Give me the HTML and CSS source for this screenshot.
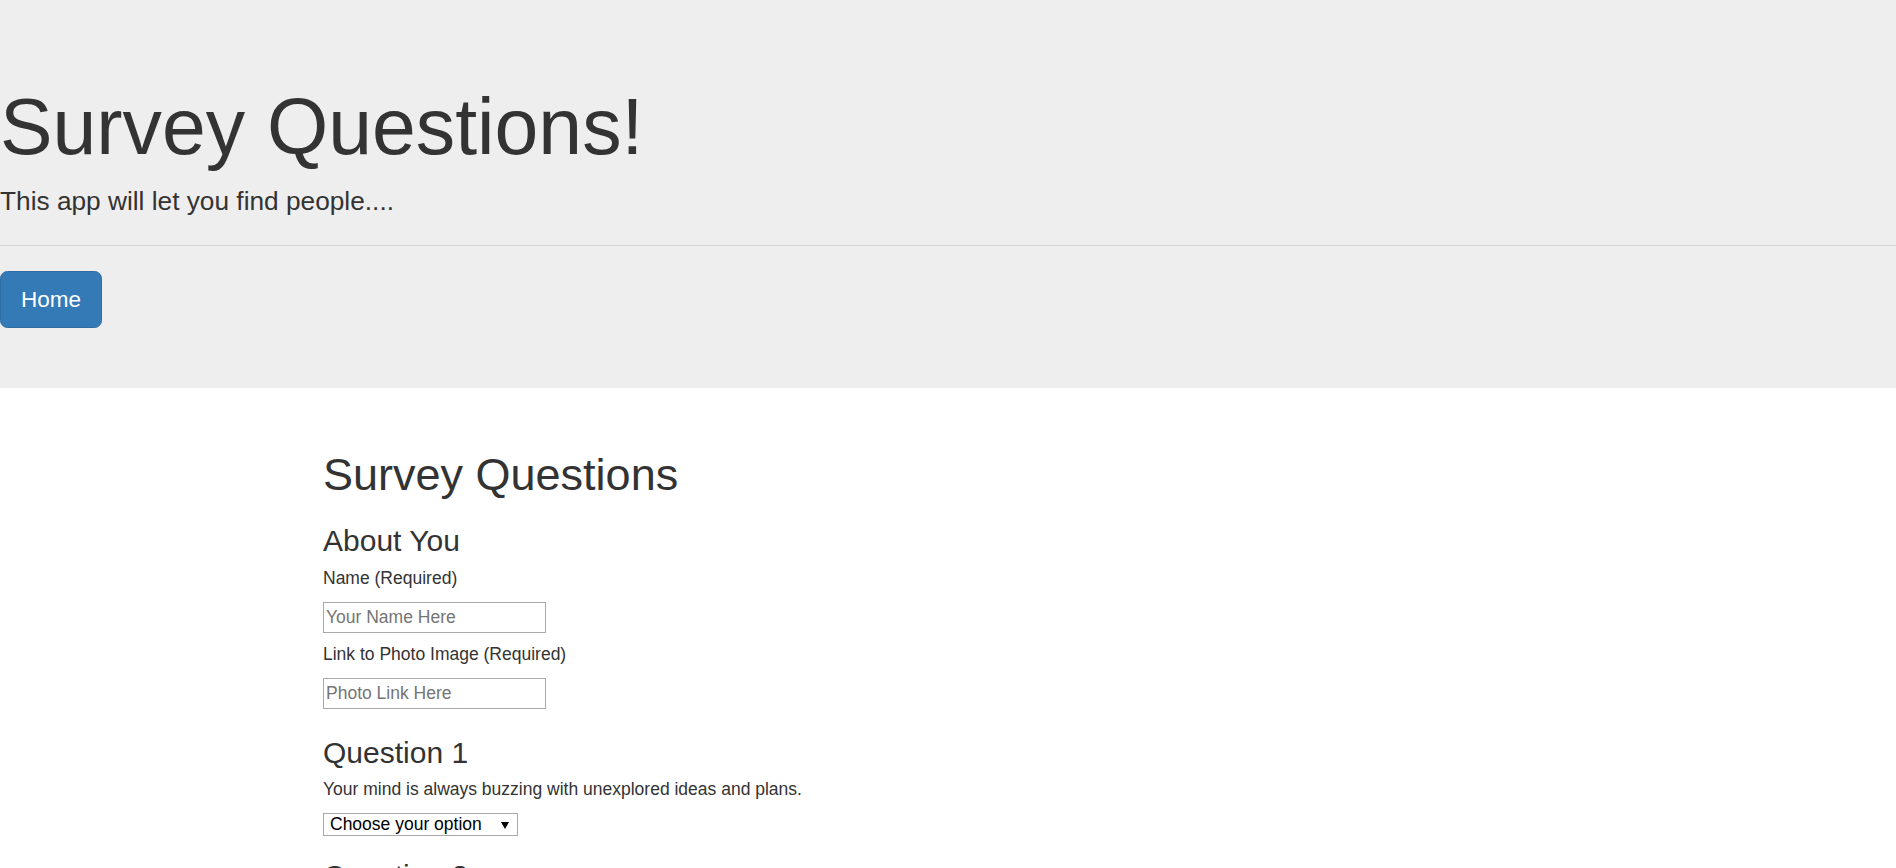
FILE: index.html
```html
<!DOCTYPE html>
<html lang="en">
<head>
<meta charset="utf-8">
<title>Survey Questions!</title>
<link rel="stylesheet" href="styles.css">
</head>
<body>
<header class="jumbotron">
  <h1 class="jumbo-title">Survey Questions!</h1>
  <p class="jumbo-lead">This app will let you find people....</p>
  <hr class="jumbo-rule">
  <div class="jumbo-actions">
    <a class="btn-home" href="#">Home</a>
  </div>
</header>
<main class="container">
  <h1 class="page-title">Survey Questions</h1>
  <form class="survey">
    <section class="group">
      <h3 class="group-title">About You</h3>
      <label class="field-label" for="name">Name (Required)</label>
      <input class="field-input" id="name" type="text" placeholder="Your Name Here">
      <label class="field-label" for="photo">Link to Photo Image (Required)</label>
      <input class="field-input" id="photo" type="text" placeholder="Photo Link Here">
    </section>
    <section class="group">
      <h3 class="group-title">Question 1</h3>
      <label class="field-label" for="q1">Your mind is always buzzing with unexplored ideas and plans.</label>
      <span class="select-wrap">
        <select class="field-select" id="q1">
          <option>Choose your option</option>
          <option>1 (Strongly Disagree)</option>
          <option>2</option>
          <option>3</option>
          <option>4</option>
          <option>5 (Strongly Agree)</option>
        </select>
      </span>
    </section>
    <section class="group">
      <h3 class="group-title">Question 2</h3>
      <label class="field-label" for="q2">Generally speaking, you rely more on your experience than your imagination.</label>
      <span class="select-wrap">
        <select class="field-select" id="q2">
          <option>Choose your option</option>
          <option>1 (Strongly Disagree)</option>
          <option>5 (Strongly Agree)</option>
        </select>
      </span>
    </section>
  </form>
</main>
</body>
</html>
```
FILE: styles.css
```css
html, body {
  margin: 0;
  padding: 0;
}

body {
  font-family: "Liberation Sans", Arial, sans-serif;
  font-size: 17.5px;
  line-height: 25px;
  color: #333;
  background: #fff;
}

/* ---------- Jumbotron ---------- */
.jumbotron {
  background: #eee;
  padding: 58.5px 0 60px;
  margin-bottom: 36.5px;
}

.jumbo-title {
  font-size: 78.75px;
  line-height: 1.1;
  font-weight: 400;
  margin: 25px 0 12.5px;
}

.jumbo-lead {
  font-size: 26.25px;
  line-height: 37.5px;
  font-weight: 200;
  margin: 0 0 18.75px;
}

.jumbo-rule {
  border: 0;
  border-top: 1px solid #d5d5d5;
  height: 0;
  margin: 25px 0;
}

.jumbo-actions {
  display: flex;
}

.btn-home {
  display: inline-block;
  padding: 12.5px 20px;
  font-size: 22.5px;
  line-height: 30px;
  color: #fff;
  background: #337ab7;
  border: 1.25px solid #2e6da4;
  border-radius: 7.5px;
  text-decoration: none;
}

/* ---------- Main ---------- */
.container {
  display: flow-root;
  width: 1250px;
  margin: 0 auto;
}

.page-title {
  font-size: 45px;
  line-height: 49.5px;
  font-weight: 400;
  margin: 25px 0 25px;
}

.survey {
  margin: 0;
}

.group-title {
  font-size: 30px;
  line-height: 33px;
  font-weight: 400;
  margin: 21px 0 8.5px;
}

.field-label {
  display: block;
  font-weight: 400;
  line-height: 25px;
  margin-bottom: 11px;
}

.field-input {
  display: block;
  box-sizing: border-box;
  width: 223px;
  height: 31px;
  margin: 0 0 9px;
  padding: 0 2px;
  font-family: inherit;
  font-size: 17.5px;
  color: #333;
  background: #fff;
  border: 1px solid #a9a9a9;
  border-radius: 0;
  outline: none;
}

.field-input:last-child {
  margin-bottom: 27px;
}

.field-input::placeholder {
  color: #757575;
  opacity: 1;
}

.select-wrap {
  position: relative;
  display: inline-block;
  vertical-align: top;
}

.field-select {
  display: block;
  box-sizing: border-box;
  width: 195px;
  height: 23px;
  margin: 0;
  padding: 0 0 0 6px;
  font-family: inherit;
  font-size: 17.5px;
  line-height: 21px;
  color: #000;
  background: #fff;
  border: 1px solid #a9a9a9;
  border-radius: 0;
  -webkit-appearance: none;
  appearance: none;
  outline: none;
}

.select-wrap::after {
  content: "";
  position: absolute;
  right: 9px;
  top: 9px;
  width: 0;
  height: 0;
  border-left: 4px solid transparent;
  border-right: 4px solid transparent;
  border-top: 7px solid #000;
  pointer-events: none;
}
```
